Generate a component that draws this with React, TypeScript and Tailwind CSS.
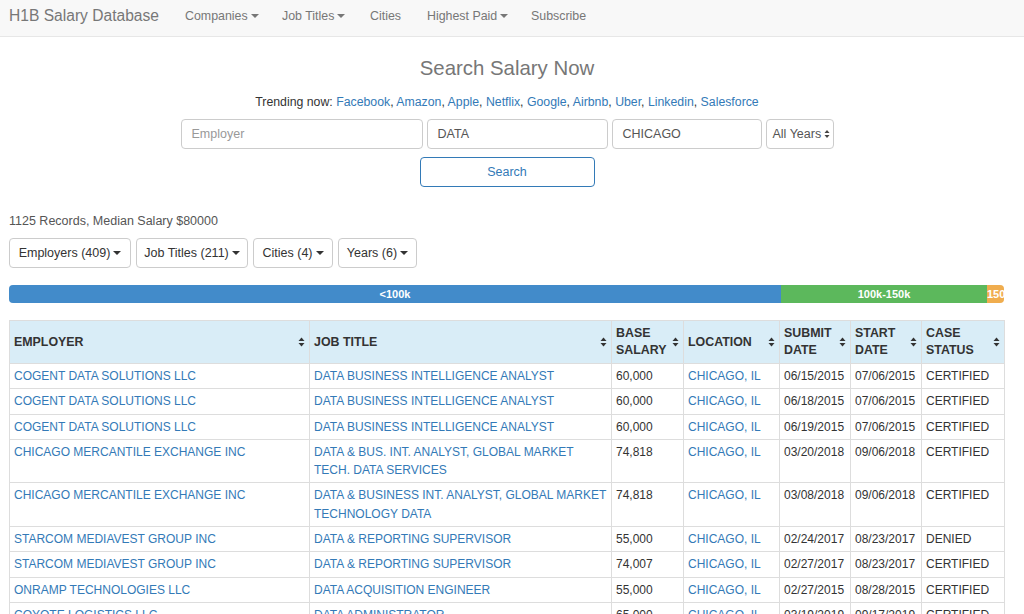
import React from 'react';

const font = "font-['Helvetica_Neue','Liberation_Sans',Arial,sans-serif]";

const Caret = () => (
  <span className="inline-block ml-[3px] align-middle w-0 h-0 border-t-[4px] border-t-current border-x-[4px] border-x-transparent" />
);

const SortIcon = () => (
  <svg width="7" height="10" viewBox="0 0 7 10" className="shrink-0">
    <path d="M3.5 0.5 L6.5 4 L0.5 4 Z" fill="#333" />
    <path d="M3.5 9.5 L6.5 6 L0.5 6 Z" fill="#333" />
  </svg>
);

type Row = {
  employer: string;
  title: string;
  salary: string;
  submit: string;
  start: string;
  status: string;
};

const rows: Row[] = [
  { employer: 'COGENT DATA SOLUTIONS LLC', title: 'DATA BUSINESS INTELLIGENCE ANALYST', salary: '60,000', submit: '06/15/2015', start: '07/06/2015', status: 'CERTIFIED' },
  { employer: 'COGENT DATA SOLUTIONS LLC', title: 'DATA BUSINESS INTELLIGENCE ANALYST', salary: '60,000', submit: '06/18/2015', start: '07/06/2015', status: 'CERTIFIED' },
  { employer: 'COGENT DATA SOLUTIONS LLC', title: 'DATA BUSINESS INTELLIGENCE ANALYST', salary: '60,000', submit: '06/19/2015', start: '07/06/2015', status: 'CERTIFIED' },
  { employer: 'CHICAGO MERCANTILE EXCHANGE INC', title: 'DATA & BUS. INT. ANALYST, GLOBAL MARKET TECH. DATA SERVICES', salary: '74,818', submit: '03/20/2018', start: '09/06/2018', status: 'CERTIFIED' },
  { employer: 'CHICAGO MERCANTILE EXCHANGE INC', title: 'DATA & BUSINESS INT. ANALYST, GLOBAL MARKET TECHNOLOGY DATA', salary: '74,818', submit: '03/08/2018', start: '09/06/2018', status: 'CERTIFIED' },
  { employer: 'STARCOM MEDIAVEST GROUP INC', title: 'DATA & REPORTING SUPERVISOR', salary: '55,000', submit: '02/24/2017', start: '08/23/2017', status: 'DENIED' },
  { employer: 'STARCOM MEDIAVEST GROUP INC', title: 'DATA & REPORTING SUPERVISOR', salary: '74,007', submit: '02/27/2017', start: '08/23/2017', status: 'CERTIFIED' },
  { employer: 'ONRAMP TECHNOLOGIES LLC', title: 'DATA ACQUISITION ENGINEER', salary: '55,000', submit: '02/27/2015', start: '08/28/2015', status: 'CERTIFIED' },
  { employer: 'COYOTE LOGISTICS LLC', title: 'DATA ADMINISTRATOR', salary: '65,000', submit: '03/19/2019', start: '09/17/2019', status: 'CERTIFIED' },
];

const trending = ['Facebook', 'Amazon', 'Apple', 'Netflix', 'Google', 'Airbnb', 'Uber', 'Linkedin', 'Salesforce'];

const headers: { label: React.ReactNode; w: string }[] = [
  { label: 'EMPLOYER', w: 'w-[300px]' },
  { label: 'JOB TITLE', w: 'w-[302px]' },
  { label: <>BASE<br />SALARY</>, w: 'w-[72px]' },
  { label: 'LOCATION', w: 'w-[96px]' },
  { label: <>SUBMIT<br />DATE</>, w: 'w-[71px]' },
  { label: <>START<br />DATE</>, w: 'w-[71px]' },
  { label: <>CASE<br />STATUS</>, w: 'w-[83px]' },
];

export default function App() {
  return (
    <div className={`${font} text-[12.5px] text-[#333] bg-white min-h-screen`}>
      {/* Navbar */}
      <nav className="h-[37px] pb-[4px] bg-[#f8f8f8] border-b border-[#e7e7e7] flex items-center text-[#777] text-[12.4px]">
        <span className="pl-[9px] text-[15.6px] w-[185px]">H1B Salary Database</span>
        <span className="w-[97px]">Companies<Caret /></span>
        <span className="w-[88px]">Job Titles<Caret /></span>
        <span className="w-[57px]">Cities</span>
        <span className="w-[104px]">Highest Paid<Caret /></span>
        <span>Subscribe</span>
      </nav>

      {/* Search */}
      <div className="flex flex-col items-center pr-[10px]">
        <h1 className="mt-[18px] text-[20.4px] text-[#777] leading-[26px]">Search Salary Now</h1>
        <p className="mt-[12px] leading-[18px] text-[12.3px]">
          Trending now:{' '}
          {trending.map((t, i) => (
            <React.Fragment key={t}>
              <a className="text-[#337ab7]">{t}</a>
              {i < trending.length - 1 ? ', ' : ''}
            </React.Fragment>
          ))}
        </p>
        <div className="mt-[8px] flex gap-[4px]">
          <div className="w-[242px] h-[30px] border border-[#ccc] rounded-[4px] flex items-center px-[10px] text-[#999]">Employer</div>
          <div className="w-[181px] h-[30px] border border-[#ccc] rounded-[4px] flex items-center px-[10px] text-[#555]">DATA</div>
          <div className="w-[150px] h-[30px] border border-[#ccc] rounded-[4px] flex items-center px-[10px] text-[#555]">CHICAGO</div>
          <div className="w-[68px] h-[30px] border border-[#ccc] rounded-[4px] flex items-center pl-[6px] text-[#555]">
            All Years
            <svg width="6" height="10" viewBox="0 0 6 10" className="ml-[3px]">
              <path d="M3 1 L5.5 4 L0.5 4 Z" fill="#444" />
              <path d="M3 9 L5.5 6 L0.5 6 Z" fill="#444" />
            </svg>
          </div>
        </div>
        <button className="mt-[8px] w-[175px] h-[30px] border border-[#337ab7] rounded-[4px] text-[#337ab7] bg-white text-[12.5px]">
          Search
        </button>
      </div>

      {/* Summary */}
      <div className="px-[9px]">
        <p className="mt-[25px] text-[#555] leading-[18px]">1125 Records, Median Salary $80000</p>
        <div className="mt-[8px] flex gap-[5px]">
          {['Employers (409)', 'Job Titles (211)', 'Cities (4)', 'Years (6)'].map((b, i) => (
            <div
              key={b}
              className={`h-[30px] border border-[#ccc] rounded-[4px] flex items-center justify-center ${['w-[122px]', 'w-[112px]', 'w-[80px]', 'w-[79px]'][i]}`}
            >
              {b}
              <Caret />
            </div>
          ))}
        </div>

        {/* Progress bar */}
        <div className="mt-[17px] h-[18px] w-[995px] rounded-[4px] overflow-hidden flex text-white text-[11px] font-bold leading-[18px] bg-[#f5f5f5]">
          <div className="w-[772px] bg-[#428bca] text-center">&lt;100k</div>
          <div className="w-[206px] bg-[#5cb85c] text-center">100k-150k</div>
          <div className="flex-1 bg-[#f0ad4e] overflow-hidden whitespace-nowrap">150</div>
        </div>

        {/* Table */}
        <table className="mt-[17px] w-[996px] table-fixed border-collapse border border-[#ddd] text-[12px]">
          <thead>
            <tr className="bg-[#d9edf7]">
              {headers.map((h, i) => (
                <th key={i} className={`${h.w} border border-[#ddd] px-[4px] py-[3px] text-left font-bold align-middle h-[43px] text-[12.4px]`}>
                  <div className="flex items-center justify-between leading-[17px]">
                    <span>{h.label}</span>
                    <SortIcon />
                  </div>
                </th>
              ))}
            </tr>
          </thead>
          <tbody>
            {rows.map((r, i) => (
              <tr key={i} className="align-top leading-[18.3px]">
                <td className="border border-[#ddd] px-[4px] py-[3px] text-[#337ab7]">{r.employer}</td>
                <td className="border border-[#ddd] px-[4px] py-[3px] text-[#337ab7]">{r.title}</td>
                <td className="border border-[#ddd] px-[4px] py-[3px]">{r.salary}</td>
                <td className="border border-[#ddd] px-[4px] py-[3px] text-[#337ab7]">CHICAGO, IL</td>
                <td className="border border-[#ddd] px-[4px] py-[3px] whitespace-nowrap">{r.submit}</td>
                <td className="border border-[#ddd] px-[4px] py-[3px] whitespace-nowrap">{r.start}</td>
                <td className="border border-[#ddd] px-[4px] py-[3px]">{r.status}</td>
              </tr>
            ))}
          </tbody>
        </table>
      </div>
    </div>
  );
}
